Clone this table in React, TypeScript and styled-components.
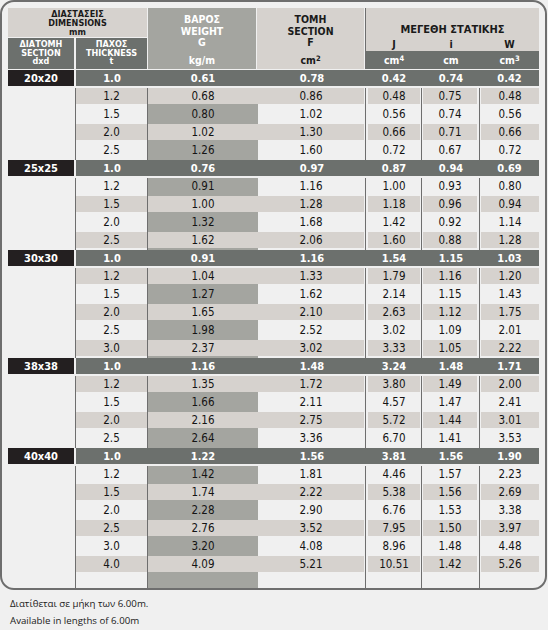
import React, {FC} from 'react';
import styled, {createGlobalStyle} from "styled-components";

const GlobalStyle = createGlobalStyle`
  html, body {
    margin: 0;
    padding: 0;
    background: #f0f0f0;
  }
`

const LIGHT = "#d6d2ce";
const MEDIUM = "#a4a5a0";
const DARK = "#6c706d";
const LINE = "#6e6e6e";
const COLS = "68px 72px 110px 108px 56px 58px 59px";
const FONT = `"DejaVu Sans Condensed", "DejaVu Sans", sans-serif`;

type Group = {label: string, rows: string[][]};

const groups: Group[] = [
    {label: "20x20", rows: [
        ["1.0", "0.61", "0.78", "0.42", "0.74", "0.42"],
        ["1.2", "0.68", "0.86", "0.48", "0.75", "0.48"],
        ["1.5", "0.80", "1.02", "0.56", "0.74", "0.56"],
        ["2.0", "1.02", "1.30", "0.66", "0.71", "0.66"],
        ["2.5", "1.26", "1.60", "0.72", "0.67", "0.72"],
    ]},
    {label: "25x25", rows: [
        ["1.0", "0.76", "0.97", "0.87", "0.94", "0.69"],
        ["1.2", "0.91", "1.16", "1.00", "0.93", "0.80"],
        ["1.5", "1.00", "1.28", "1.18", "0.96", "0.94"],
        ["2.0", "1.32", "1.68", "1.42", "0.92", "1.14"],
        ["2.5", "1.62", "2.06", "1.60", "0.88", "1.28"],
    ]},
    {label: "30x30", rows: [
        ["1.0", "0.91", "1.16", "1.54", "1.15", "1.03"],
        ["1.2", "1.04", "1.33", "1.79", "1.16", "1.20"],
        ["1.5", "1.27", "1.62", "2.14", "1.15", "1.43"],
        ["2.0", "1.65", "2.10", "2.63", "1.12", "1.75"],
        ["2.5", "1.98", "2.52", "3.02", "1.09", "2.01"],
        ["3.0", "2.37", "3.02", "3.33", "1.05", "2.22"],
    ]},
    {label: "38x38", rows: [
        ["1.0", "1.16", "1.48", "3.24", "1.48", "1.71"],
        ["1.2", "1.35", "1.72", "3.80", "1.49", "2.00"],
        ["1.5", "1.66", "2.11", "4.57", "1.47", "2.41"],
        ["2.0", "2.16", "2.75", "5.72", "1.44", "3.01"],
        ["2.5", "2.64", "3.36", "6.70", "1.41", "3.53"],
    ]},
    {label: "40x40", rows: [
        ["1.0", "1.22", "1.56", "3.81", "1.56", "1.90"],
        ["1.2", "1.42", "1.81", "4.46", "1.57", "2.23"],
        ["1.5", "1.74", "2.22", "5.38", "1.56", "2.69"],
        ["2.0", "2.28", "2.90", "6.76", "1.53", "3.38"],
        ["2.5", "2.76", "3.52", "7.95", "1.50", "3.97"],
        ["3.0", "3.20", "4.08", "8.96", "1.48", "4.48"],
        ["4.0", "4.09", "5.21", "10.51", "1.42", "5.26"],
    ]},
];

const Frame = styled.div`
  box-sizing: border-box;
  width: 547px;
  border: 2px solid #6e6e6e;
  border-radius: 14px;
  padding: 6px 6px 0 6px;
  overflow: hidden;
  font-family: ${FONT};
  font-stretch: condensed;
`

const Header = styled.div`
  display: flex;
  height: 61px;
  margin-bottom: 1px;
`

const DimGroup = styled.div`
  width: 139px;
  margin-right: 1px;
  display: flex;
  flex-direction: column;
  gap: 1px;
`

const DimTitle = styled.div`
  height: 29px;
  background: ${LIGHT};
  color: #1a1a1a;
  display: flex;
  flex-direction: column;
  justify-content: center;
  padding-top: 2px;
  box-sizing: border-box;
  text-align: center;
  font-size: 9px;
  font-weight: 700;
  line-height: 9px;
`

const DimSubRow = styled.div`
  display: flex;
  gap: 2px;
  height: 31px;
`

const DimSub = styled.div<{$w: number}>`
  width: ${props => props.$w}px;
  background: ${DARK};
  color: #fff;
  display: flex;
  flex-direction: column;
  justify-content: center;
  padding-bottom: 1px;
  box-sizing: border-box;
  text-align: center;
  font-size: 9px;
  font-weight: 700;
  line-height: 8.7px;
`

const HeadCol = styled.div<{$w: number, $bg: string, $dark?: boolean, $line?: boolean}>`
  width: ${props => props.$w}px;
  margin-right: ${props => props.$line ? 0 : 1}px;
  border-right: ${props => props.$line ? `1px solid ${LINE}` : "none"};
  padding-right: ${props => props.$line ? 1 : 0}px;
  background-clip: content-box;
  background-color: ${props => props.$bg};
  color: ${props => props.$dark ? "#1a1a1a" : "#fff"};
  display: flex;
  flex-direction: column;
  text-align: center;
  font-size: 10.5px;
  font-weight: 700;
`

const HeadTop = styled.div`
  height: 43px;
  padding-top: 6px;
  box-sizing: border-box;
  line-height: 11.5px;
`

const HeadUnit = styled.div`
  height: 18px;
  line-height: 19px;
`

const Statics = styled.div`
  width: 173px;
  display: flex;
  flex-direction: column;
  font-weight: 700;
  font-size: 10.5px;
`

const StaticsTop = styled.div`
  height: 43px;
  background: ${LIGHT};
  color: #1a1a1a;
  display: flex;
  flex-direction: column;
  justify-content: flex-end;
`

const StaticsTitle = styled.div`
  text-align: center;
  font-size: 11px;
  line-height: 14px;
  margin-bottom: 0;
`

const SubGrid = styled.div<{$dark?: boolean}>`
  display: grid;
  grid-template-columns: 56px 58px 59px;
  height: ${props => props.$dark ? 18 : 14}px;
  line-height: ${props => props.$dark ? 19 : 14}px;
  background: ${props => props.$dark ? DARK : "transparent"};
  color: ${props => props.$dark ? "#fff" : "#1a1a1a"};
  text-align: center;
`

const Row = styled.div`
  display: grid;
  grid-template-columns: ${COLS};
`

const Cell = styled.div<{$line?: boolean, $bg?: string, $h?: number}>`
  height: ${props => props.$h ?? 18}px;
  box-sizing: border-box;
  border-right: ${props => props.$line ? `1px solid ${LINE}` : "none"};
  background: ${props => props.$bg ?? "transparent"};
`

const Fill = styled.div<{$bg?: string, $ml?: number, $mr?: number}>`
  height: 16px;
  line-height: 17px;
  margin: 0 ${props => props.$mr ?? 0}px 0 ${props => props.$ml ?? 0}px;
  background: ${props => props.$bg ?? "transparent"};
  text-align: center;
  font-size: 11.5px;
  color: #141414;
`

const Label = styled.div`
  height: 16px;
  line-height: 17px;
  margin-right: 2px;
  background: #231f20;
  color: #fff;
  text-align: center;
  font-size: 11px;
  font-weight: 700;
`

const Band = styled.div`
  height: 16px;
  line-height: 17px;
  background: ${DARK};
  color: #fff;
  text-align: center;
  font-size: 11px;
  font-weight: 700;
`

const Sup = styled.sup`
  font-size: 7.5px;
  vertical-align: 3px;
  line-height: 0;
`

const Footer = styled.div`
  padding: 5px 0 0 10px;
  font-family: "Open Sans", sans-serif;
  font-size: 9.7px;
  line-height: 17px;
  color: #1a1a1a;
`

// insets of the striped fill per column (c2..c7)
const insets: [number, number][] = [[0, 0], [0, 0], [0, 1], [2, 1], [1, 2], [1, 0]];
const lined = [true, false, true, true, true, false];

const GroupRow: FC<{label: string, values: string[]}> = ({label, values}) => (
    <Row>
        <Cell><Label>{label}</Label></Cell>
        {values.map((v, i) => <Cell key={i}><Band>{v}</Band></Cell>)}
    </Row>
);

const DataRow: FC<{values: string[], striped: boolean, height?: number}> = ({values, striped, height}) => (
    <Row>
        <Cell $line $h={height}/>
        {values.map((v, i) => (
            <Cell key={i} $line={lined[i]} $h={height} $bg={i === 1 ? MEDIUM : undefined}>
                <Fill $bg={striped ? LIGHT : undefined} $ml={insets[i][0]} $mr={insets[i][1]}>{v}</Fill>
            </Cell>
        ))}
    </Row>
);

const App: FC = () => {
    let idx = 0;
    const body: React.ReactNode[] = [];
    groups.forEach(g => {
        g.rows.forEach((r, j) => {
            const striped = idx % 2 === 1;
            body.push(j === 0
                ? <GroupRow key={idx} label={g.label} values={r}/>
                : <DataRow key={idx} values={r} striped={striped}/>);
            idx++;
        });
    });
    body.push(<DataRow key="empty" values={["", "", "", "", "", ""]} striped={false} height={14}/>);

    return (
        <>
            <GlobalStyle/>
            <Frame>
                <Header>
                    <DimGroup>
                        <DimTitle>
                            <div>ΔΙΑΣΤΑΣΕΙΣ</div>
                            <div>DIMENSIONS</div>
                            <div>mm</div>
                        </DimTitle>
                        <DimSubRow>
                            <DimSub $w={66}>
                                <div>ΔΙΑΤΟΜΗ</div>
                                <div>SECTION</div>
                                <div>dxd</div>
                            </DimSub>
                            <DimSub $w={71}>
                                <div>ΠΑΧΟΣ</div>
                                <div>THICKNESS</div>
                                <div>t</div>
                            </DimSub>
                        </DimSubRow>
                    </DimGroup>
                    <HeadCol $w={109} $bg={MEDIUM}>
                        <HeadTop>
                            <div>ΒΑΡΟΣ</div>
                            <div>WEIGHT</div>
                            <div>G</div>
                        </HeadTop>
                        <HeadUnit>kg/m</HeadUnit>
                    </HeadCol>
                    <HeadCol $w={108} $bg={LIGHT} $dark $line>
                        <HeadTop>
                            <div>ΤΟΜΗ</div>
                            <div>SECTION</div>
                            <div>F</div>
                        </HeadTop>
                        <HeadUnit>cm<Sup>2</Sup></HeadUnit>
                    </HeadCol>
                    <Statics>
                        <StaticsTop>
                            <StaticsTitle>ΜΕΓΕΘΗ ΣΤΑΤΙΚΗΣ</StaticsTitle>
                            <SubGrid>
                                <span>J</span>
                                <span>i</span>
                                <span>W</span>
                            </SubGrid>
                        </StaticsTop>
                        <SubGrid $dark>
                            <span>cm<Sup>4</Sup></span>
                            <span>cm</span>
                            <span>cm<Sup>3</Sup></span>
                        </SubGrid>
                    </Statics>
                </Header>
                {body}
            </Frame>
            <Footer>
                <div>Διατίθεται σε μήκη των 6.00m.</div>
                <div>Available in lengths of 6.00m</div>
            </Footer>
        </>
    );
};

export default App;
